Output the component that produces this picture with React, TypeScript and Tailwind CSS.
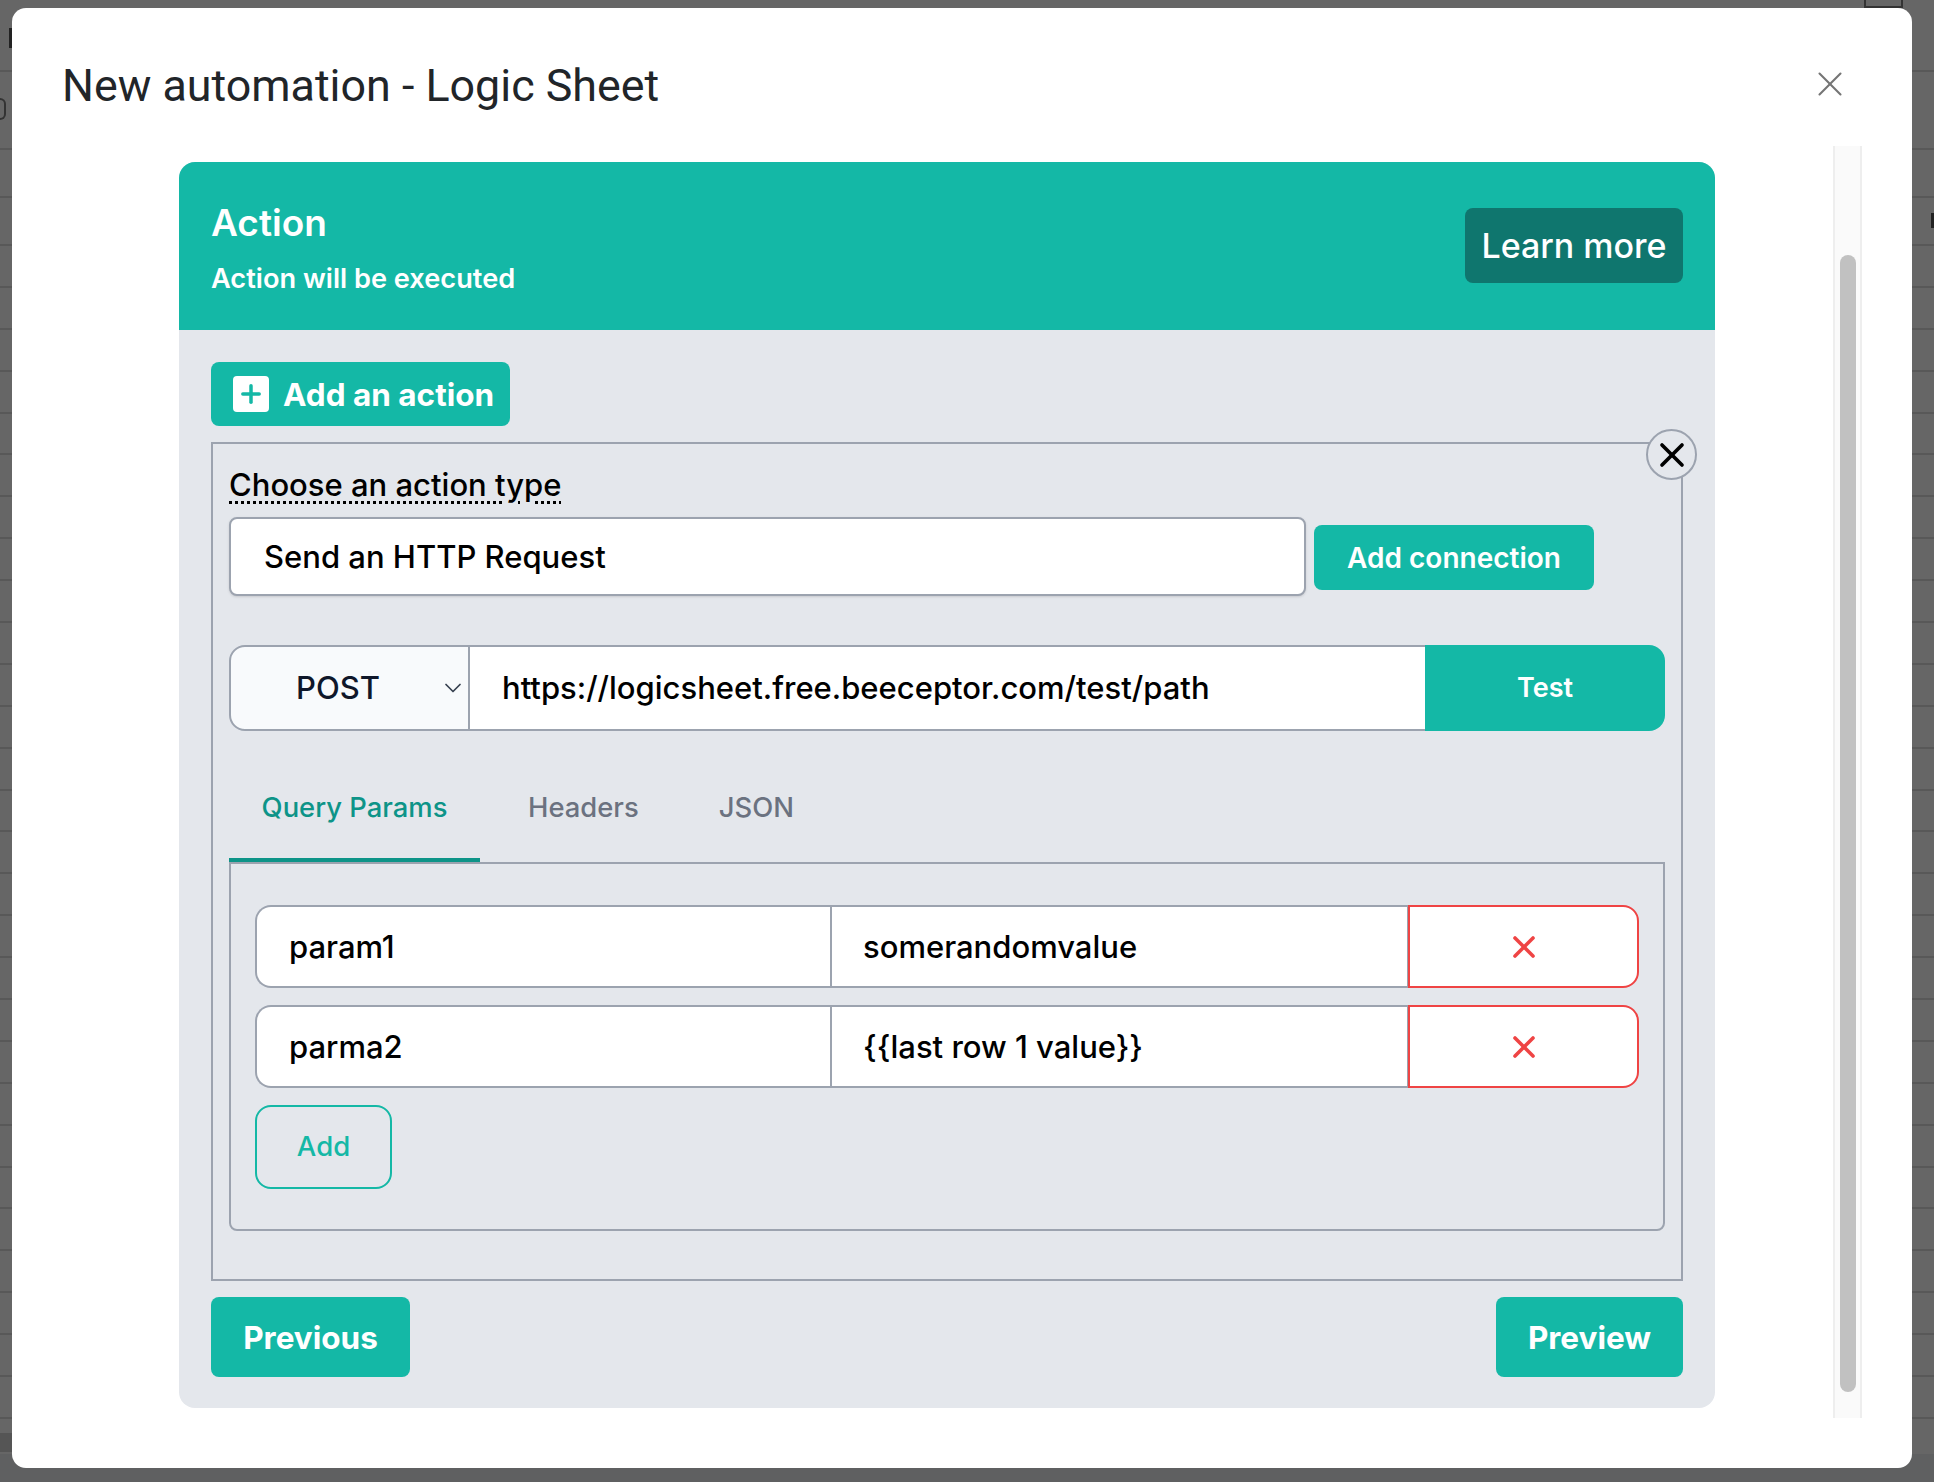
import React from 'react';
import { X, ChevronDown, Plus } from 'lucide-react';

const SHEET_ROWS = Array.from({ length: 29 });

function ParamRow({ name, value }: { name: string; value: string }) {
  return (
    <div className="flex h-[83px] text-[31px] font-medium text-black">
      <div className="flex w-[575px] items-center rounded-l-2xl border-2 border-r-0 border-[#9ca3af] bg-white pl-[32px] pt-[2px]">
        {name}
      </div>
      <div className="flex w-[579px] items-center border-2 border-[#9ca3af] bg-white pl-[31px] pt-[2px]">
        {value}
      </div>
      <button className="-ml-[1px] flex w-[231px] items-center justify-center rounded-r-2xl border-2 border-[#ef4444] bg-white text-[#ef4444]">
        <X className="h-[36px] w-[36px]" strokeWidth={2.4} />
      </button>
    </div>
  );
}

export default function App() {
  return (
    <div className="relative h-[1482px] w-[1934px] overflow-hidden bg-[#666666] font-[Inter,sans-serif]">
      {/* Dimmed sheet behind the dialog */}
      <div className="flex flex-col pt-[24px]">
        <div className="h-[48px] border-b-2 border-[#585858]" />
        <div className="h-[78px] border-b-2 border-[#585858]" />
        <div className="h-[48px] border-b-2 border-[#585858]" />
        <div className="h-[48px] border-b-2 border-[#585858]" />
        {SHEET_ROWS.map((_, i) => (
          <div key={i} className="h-[41.9px] border-b-2 border-[#585858]" />
        ))}
      </div>
      <div className="absolute bottom-[30px] left-0 h-[19px] w-[12px] bg-[#555555]" />
      <div className="absolute inset-x-0 bottom-0 h-[28px] bg-[#5f6061]" />
      <div className="absolute left-[9px] top-[28px] h-[20px] w-[3px] bg-[#222222]" />
      <div className="absolute left-0 top-[98px] h-[22px] w-[6px] rounded-r-full border-2 border-l-0 border-[#333333]" />
      <div className="absolute left-[1864px] top-0 h-[8px] w-[39px] border-x-2 border-b-2 border-[#333333]" />
      <div className="absolute left-[1931px] top-[213px] h-[15px] w-[3px] bg-[#222222]" />

      {/* Dialog */}
      <div className="absolute left-[12px] top-[8px] flex h-[1460px] w-[1900px] flex-col rounded-[14px] bg-white">
        <div className="flex h-[138px] shrink-0 items-center justify-between pl-[50px] pr-[61px] pt-[26px]">
          <h2 className="pb-[8px] font-[Roboto,sans-serif] text-[44.8px] leading-none text-[#212529]">
            New automation - Logic Sheet
          </h2>
          <X className="-mt-[12px] h-[42px] w-[42px] text-[#757575]" strokeWidth={1.2} />
        </div>

        <div className="flex flex-1 pl-[167px]">
          <div className="mt-[16px] h-[1246px] w-[1536px] overflow-hidden rounded-2xl bg-[#e4e7ec]">
            {/* Banner */}
            <div className="flex h-[168px] items-start justify-between bg-[#14b8a6] px-[32px] pt-[46px] text-white">
              <div>
                <div className="-mt-[5px] text-[37px] font-semibold leading-[40px]">Action</div>
                <div className="mt-[20px] text-[27.2px] font-semibold leading-[32px]">Action will be executed</div>
              </div>
              <button className="flex h-[75px] w-[218px] items-center justify-center rounded-lg bg-[#0f766e] text-[34px] font-medium">
                Learn more
              </button>
            </div>

            {/* Body */}
            <div className="px-[32px] pt-[32px]">
              <button className="flex h-[64px] w-[299px] items-center gap-[14px] rounded-lg bg-[#14b8a6] pl-[22px] text-[31.5px] font-bold text-white">
                <span className="flex h-[36px] w-[36px] items-center justify-center rounded bg-white text-[#14b8a6]">
                  <Plus className="h-[28px] w-[28px]" strokeWidth={3} />
                </span>
                <span className="pt-[2px]">Add an action</span>
              </button>

              <div className="relative mt-[16px] h-[839px] w-[1472px] border-2 border-[#9ca3af] pl-[16px] pt-[22px]">
                <button className="absolute -right-[16px] -top-[15px] flex h-[51px] w-[51px] items-center justify-center rounded-full border-2 border-[#9ca3af] bg-[#e4e7ec] text-black">
                  <X className="h-[40px] w-[40px]" strokeWidth={2.2} />
                </button>

                <span className="text-[31px] font-medium leading-[38px] text-black underline decoration-black decoration-dotted decoration-[3px] underline-offset-[5px]">
                  Choose an action type
                </span>

                <div className="mt-[13px] flex items-center gap-[8px]">
                  <div className="flex h-[79px] w-[1077px] items-center rounded-lg border-2 border-[#9ca3af] bg-white pl-[33px] pt-[2px] text-[31px] font-medium text-black shadow-sm">
                    Send an HTTP Request
                  </div>
                  <button className="mt-[2px] flex h-[65px] w-[280px] items-center justify-center rounded-lg bg-[#14b8a6] text-[28px] font-semibold text-white">
                    Add connection
                  </button>
                </div>

                {/* Request line */}
                <div className="mt-[49px] flex h-[86px] w-[1436px] text-[31px] font-medium">
                  <div className="flex w-[241px] items-center rounded-l-2xl border-2 border-[#9ca3af] bg-[#f8fafc] pl-[65px] text-[#0f172a]">
                    <span className="flex-1">POST</span>
                    <ChevronDown className="mr-[1px] h-[28px] w-[28px] text-[#374151]" strokeWidth={1.5} />
                  </div>
                  <div className="flex w-[955px] items-center border-y-2 border-r-0 border-[#9ca3af] bg-white pl-[32px] text-black">
                    https://logicsheet.free.beeceptor.com/test/path
                  </div>
                  <button className="flex w-[240px] items-center justify-center rounded-r-2xl bg-[#14b8a6] text-[27px] font-semibold text-white">
                    Test
                  </button>
                </div>

                {/* Tabs */}
                <div className="mt-[34px] flex h-[97px] w-[1436px] items-start pt-[22px] text-[27.4px] font-medium text-[#6b7280]">
                  <div className="flex h-[75px] w-[251px] items-start justify-center border-b-4 border-[#0d9488] text-[#0d9488]">
                    Query Params
                  </div>
                  <div className="ml-[48px]">Headers</div>
                  <div className="ml-[80px]">JSON</div>
                </div>
                <div className="h-[369px] w-[1436px] rounded-b-lg border-2 border-[#9ca3af] px-[24px] pt-[41px]">
                  <div className="flex flex-col gap-[17px]">
                    <ParamRow name="param1" value="somerandomvalue" />
                    <ParamRow name="parma2" value="{{last row 1 value}}" />
                  </div>
                  <button className="mt-[17px] flex h-[84px] w-[137px] items-center justify-center rounded-2xl border-2 border-[#14b8a6] text-[27.5px] font-medium text-[#14b8a6]">
                    Add
                  </button>
                </div>
              </div>

              <div className="mt-[16px] flex w-[1472px] justify-between">
                <button className="flex h-[80px] w-[199px] items-center justify-center rounded-lg bg-[#14b8a6] pt-[1px] text-[31.5px] font-bold text-white">
                  Previous
                </button>
                <button className="flex h-[80px] w-[187px] items-center justify-center rounded-lg bg-[#14b8a6] pt-[1px] text-[31.5px] font-bold text-white">
                  Preview
                </button>
              </div>
            </div>
          </div>

          {/* Scrollbar */}
          <div className="ml-[118px] h-[1272px] w-[29px] border-x-2 border-[#eeeeee] bg-[#fafafa] pl-[5px] pt-[109px]">
            <div className="h-[1137px] w-[16px] rounded-lg bg-[#c1c1c1]" />
          </div>
        </div>
      </div>
    </div>
  );
}
